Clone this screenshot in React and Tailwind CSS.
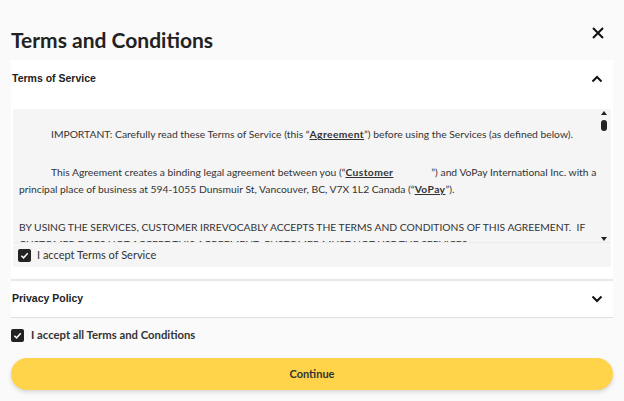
import React, { useState } from "react";

const Check = ({ checked, onChange }) => (
  <button
    onClick={onChange}
    className="flex h-[13px] w-[13px] shrink-0 items-center justify-center rounded-[2px] bg-[#222]"
  >
    {checked && (
      <svg width="9" height="9" viewBox="0 0 10 10" fill="none">
        <path d="M1.5 5.2 L4 7.6 L8.6 2.4" stroke="white" strokeWidth="1.6" />
      </svg>
    )}
  </button>
);

const Chevron = ({ up }) => (
  <svg width="12" height="8" viewBox="0 0 12 8" fill="none" className={up ? "" : "rotate-180"}>
    <path d="M1.5 6.5 L6 2 L10.5 6.5" stroke="#111" strokeWidth="2" />
  </svg>
);

const headFont = { fontFamily: "'Liberation Sans', Arial, sans-serif" };

const TermsDialog = () => {
  const [tos, setTos] = useState(true);
  const [all, setAll] = useState(true);

  return (
    <div className="h-[401px] w-[624px] overflow-hidden bg-[#fafafa] px-[11px] text-[#222]" style={{ fontFamily: "Lato, sans-serif" }}>
      <div className="flex h-[60px] items-end justify-between pb-[10px]">
        <h1 className="text-[21px] font-bold leading-none text-[#222]">Terms and Conditions</h1>
        <svg width="12" height="12" viewBox="0 0 12 12" className="mb-[11px] mr-[9px]">
          <path d="M1 1 L11 11 M11 1 L1 11" stroke="#111" strokeWidth="2" />
        </svg>
      </div>

      <div className="bg-white">
        <div className="flex h-[37px] items-center justify-between pl-[1px] pr-[10px]">
          <span className="text-[10.5px] font-bold" style={headFont}>Terms of Service</span>
          <Chevron up />
        </div>
        <div className="mx-[2px] mt-[12px] bg-[#f5f5f5]">
          <div className="relative h-[134px] overflow-hidden border-b border-[#ececec] pl-[6px] pr-[8px] pt-[17px] text-[10.3px] leading-[17px] text-[#333]">
            <p className="indent-[32px]">
              IMPORTANT: Carefully read these Terms of Service (this “<b className="tracking-[0.4px] underline">Agreement</b>”) before using the Services (as defined below).
            </p>
            <p className="mt-[21px] indent-[32px]">
              This Agreement creates a binding legal agreement between you (“<b className="tracking-[0.4px] underline">Customer</b>
              <span className="inline-block w-[38px]" />”) and VoPay International Inc. with a principal place of business at 594-1055 Dunsmuir St, Vancouver, BC, V7X 1L2 Canada (“<b className="tracking-[0.4px] underline">VoPay</b>”).
            </p>
            <p className="mt-[21px]">
              BY USING THE SERVICES, CUSTOMER IRREVOCABLY ACCEPTS THE TERMS AND CONDITIONS OF THIS AGREEMENT.&nbsp; IF CUSTOMER DOES NOT ACCEPT THIS AGREEMENT, CUSTOMER MUST NOT USE THE SERVICES.
            </p>
            <div className="absolute right-[2px] top-[2px] flex h-[130px] w-[10px] flex-col items-center">
              <svg width="6" height="4" viewBox="0 0 6 4"><path d="M0 4 L3 0 L6 4Z" fill="#222" /></svg>
              <div className="mt-[5px] h-[11px] w-[6px] rounded-full bg-[#222]" />
              <div className="flex-1" />
              <svg width="6" height="4" viewBox="0 0 6 4"><path d="M0 0 L3 4 L6 0Z" fill="#222" /></svg>
            </div>
          </div>
          <div className="flex h-[24px] items-center gap-[6px] pl-[5px] text-[11px] text-[#333]">
            <Check checked={tos} onChange={() => setTos(!tos)} />
            <span>I accept Terms of Service</span>
          </div>
        </div>
        <div className="h-[14px] border-b-[2px] border-[#e8e8e8]" />
        <div className="flex h-[37px] items-center justify-between border-b border-[#dedede] pl-[1px] pr-[10px]">
          <span className="text-[10.5px] font-bold" style={headFont}>Privacy Policy</span>
          <Chevron />
        </div>
      </div>

      <div className="flex h-[35px] items-center gap-[7px]">
        <Check checked={all} onChange={() => setAll(!all)} />
        <span className="text-[11.3px] font-bold text-[#333]">I accept all Terms and Conditions</span>
      </div>

      <button className="mt-[5px] h-[32px] w-full rounded-full bg-[#ffd34a] text-[11px] font-bold text-[#333] shadow-[0_2px_4px_rgba(0,0,0,0.15)]">
        Continue
      </button>
    </div>
  );
};

export default function App() {
  return <TermsDialog />;
}
